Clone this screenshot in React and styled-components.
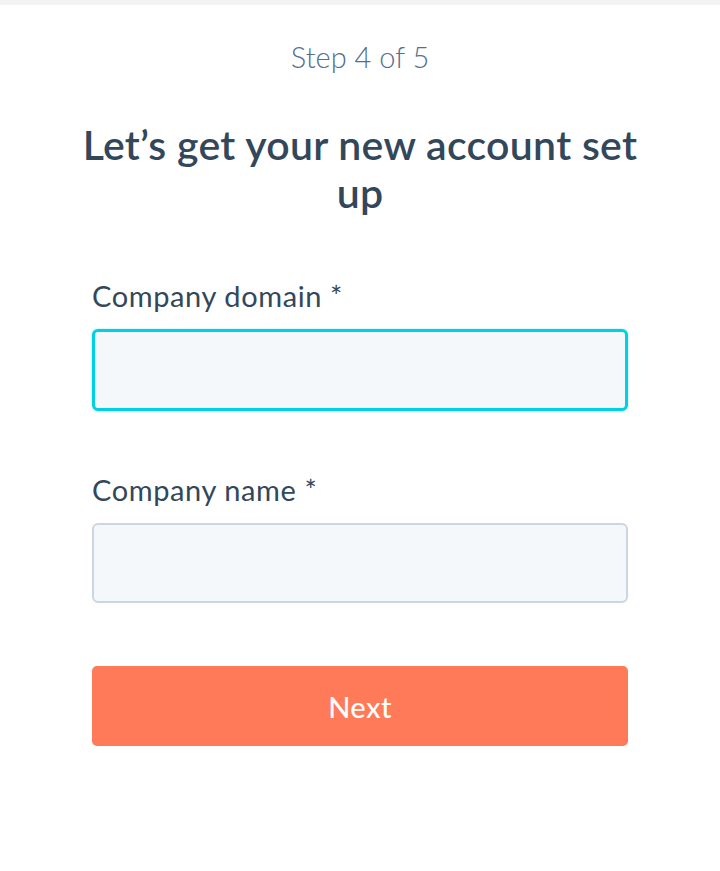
import React from 'react';
import styled, { createGlobalStyle } from 'styled-components';

const GlobalStyle = createGlobalStyle`
  html, body { margin: 0; padding: 0; background: #fff; }
  body { font-family: Lato, "Noto Sans", sans-serif; color: #33475b; }
`;

const TopBar = styled.div`
  height: 5px; background: #f3f3f3;
`;

const Page = styled.div`
  display: flex; flex-direction: column; align-items: center; padding: 34px 92px 0 92px;
`;

const StepText = styled.div`
  font-size: 29px; font-weight: 300; color: #516f90; line-height: 36px; text-align: center;
`;

const Title = styled.h1`
  margin: 46px -20px 0 -20px; font-size: 41px; font-weight: 600; line-height: 48px; text-align: center;
  color: #33475b; letter-spacing: 0.3px;
`;

const Form = styled.form`
  width: 100%; display: flex; flex-direction: column; margin-top: 62px;
`;

const Field = styled.div`
  display: flex; flex-direction: column; margin-bottom: 62px;
`;

const Label = styled.label`
  font-size: 29px; font-weight: 400; color: #33475b; line-height: 34px; margin-bottom: 16px;
  letter-spacing: 0.6px;
`;

const Input = styled.input`
  box-sizing: border-box; width: 100%; height: ${p => (p.focused ? '82px' : '80px')}; background: #f5f8fa;
  border-radius: 6px; border: ${p => (p.focused ? '3px solid #00d0e4' : '2px solid #cbd6e2')};
  box-shadow: ${p => (p.focused ? '0 0 2px rgba(0, 208, 228, 0.5)' : 'none')};
  outline: none; font-size: 24px; font-family: inherit; padding: 0 16px;
`;

const Button = styled.button`
  margin-top: 1px; height: 80px; width: 100%; border: none; border-radius: 5px; background: #ff7a59;
  color: #fff; font-family: inherit; font-size: 29px; font-weight: 500; letter-spacing: 0.4px;
`;

const App = () => (
  <div>
    <GlobalStyle />
    <TopBar />
    <Page>
      <StepText>Step 4 of 5</StepText>
      <Title>Let’s get your new account set up</Title>
      <Form onSubmit={e => e.preventDefault()}>
        <Field>
          <Label>Company domain *</Label>
          <Input focused />
        </Field>
        <Field>
          <Label>Company name *</Label>
          <Input />
        </Field>
        <Button type="submit">Next</Button>
      </Form>
    </Page>
  </div>
);

export default App;
